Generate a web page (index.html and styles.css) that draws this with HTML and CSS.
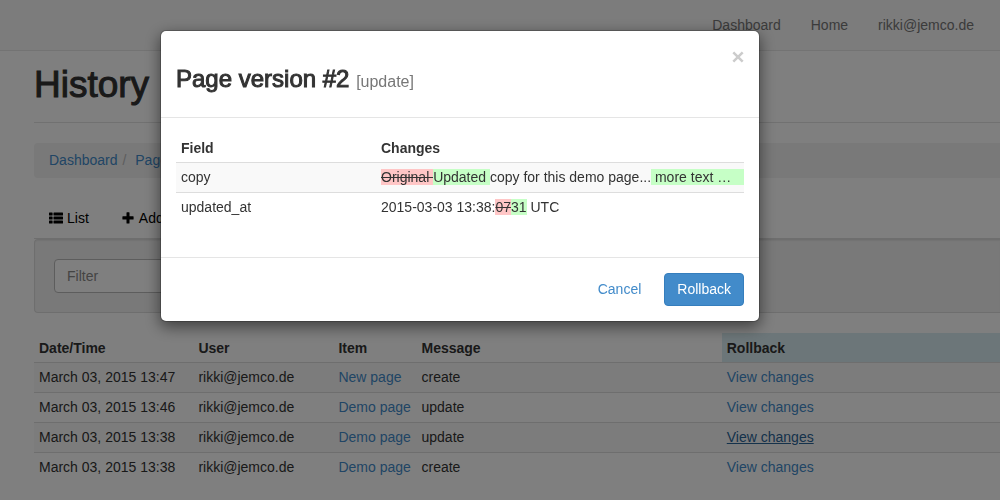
FILE: index.html
```html
<!DOCTYPE html>
<html lang="en">
<head>
<meta charset="utf-8">
<title>History</title>
<link rel="stylesheet" href="styles.css">
</head>
<body>
<nav class="navbar">
  <a href="#">Dashboard</a>
  <a href="#">Home</a>
  <a href="#">rikki@jemco.de</a>
</nav>
<main class="container">
  <h1 class="page-header">History</h1>
  <ol class="breadcrumb">
    <li><a href="#">Dashboard</a></li>
    <li><a href="#">Pages</a></li>
  </ol>
  <div class="tabs">
    <a href="#"><svg class="icon" viewBox="0 0 14 14" aria-hidden="true"><path d="M.5 1.500h2.600a.5.5 0 0 1 .5.5v2a.5.5 0 0 1-.5.5H.5a.5.5 0 0 1-.5-.5V2a.5.5 0 0 1 .5-.5zM5 1.500h8.500a.5.5 0 0 1 .5.5v2a.5.5 0 0 1-.5.5H5a.5.5 0 0 1-.5-.5V2a.5.5 0 0 1 .5-.5zM.5 5.500h2.600a.5.5 0 0 1 .5.5v2a.5.5 0 0 1-.5.5H.5a.5.5 0 0 1-.5-.5V6a.5.5 0 0 1 .5-.5zM5 5.500h8.500a.5.5 0 0 1 .5.5v2a.5.5 0 0 1-.5.5H5a.5.5 0 0 1-.5-.5V6a.5.5 0 0 1 .5-.5zM.5 9.500h2.600a.5.5 0 0 1 .5.5v2a.5.5 0 0 1-.5.5H.5a.5.5 0 0 1-.5-.5v-2a.5.5 0 0 1 .5-.5zM5 9.500h8.500a.5.5 0 0 1 .5.5v2a.5.5 0 0 1-.5.5H5a.5.5 0 0 1-.5-.5v-2a.5.5 0 0 1 .5-.5z"/></svg>List</a>
    <a href="#"><svg class="icon" viewBox="0 0 14 14" aria-hidden="true"><path d="M6 1.200h2a.5.5 0 0 1 .5.5V5.200h3.600a.5.5 0 0 1 .5.5v2.200a.5.5 0 0 1-.5.5H8.500v3.600a.5.5 0 0 1-.5.5H6a.5.5 0 0 1-.5-.5V8.400H1.900a.5.5 0 0 1-.5-.5V5.700a.5.5 0 0 1 .5-.5h3.600V1.700a.5.5 0 0 1 .5-.5z"/></svg>Add</a>
  </div>
  <form class="well"><input type="text" class="filter" placeholder="Filter" aria-label="Filter"></form>
  <table class="table history">
    <thead>
      <tr><th class="col-date">Date/Time</th><th class="col-user">User</th><th class="col-item">Item</th><th class="col-message">Message</th><th class="info">Rollback</th></tr>
    </thead>
    <tbody>
      <tr><td>March 03, 2015 13:47</td><td>rikki@jemco.de</td><td><a href="#">New page</a></td><td>create</td><td><a href="#">View changes</a></td></tr>
      <tr><td>March 03, 2015 13:46</td><td>rikki@jemco.de</td><td><a href="#">Demo page</a></td><td>update</td><td><a href="#">View changes</a></td></tr>
      <tr><td>March 03, 2015 13:38</td><td>rikki@jemco.de</td><td><a href="#">Demo page</a></td><td>update</td><td><a href="#" class="active">View changes</a></td></tr>
      <tr><td>March 03, 2015 13:38</td><td>rikki@jemco.de</td><td><a href="#">Demo page</a></td><td>create</td><td><a href="#">View changes</a></td></tr>
    </tbody>
  </table>
</main>
<div class="backdrop">
  <section class="modal" role="dialog" aria-labelledby="modal-title">
    <header class="modal-header">
      <h3 id="modal-title">Page version #2 <small>[update]</small></h3>
      <button type="button" class="close" aria-label="Close"><svg class="close-icon" viewBox="0 0 11 11" aria-hidden="true"><path d="M1.200 1.200l8.600 8.600M9.800 1.200l-8.600 8.600"/></svg></button>
    </header>
    <div class="modal-body">
      <table class="table">
        <thead><tr><th class="col-field">Field</th><th>Changes</th></tr></thead>
        <tbody>
          <tr><td>copy</td><td class="changes"><div class="diff"><del>Original </del><ins>Updated </ins><span>copy for this demo page...</span><ins class="rest"> more text …</ins></div></td></tr>
          <tr><td>updated_at</td><td class="changes"><div class="diff"><span>2015-03-03 13:38:</span><del>07</del><ins>31</ins><span> UTC</span></div></td></tr>
        </tbody>
      </table>
    </div>
    <footer class="modal-footer">
      <button type="button" class="btn btn-link">Cancel</button>
      <button type="button" class="btn btn-primary">Rollback</button>
    </footer>
  </section>
</div>
</body>
</html>
```

FILE: styles.css
```css
* {
  box-sizing: border-box;
}

body {
  margin: 0;
  background: #fff;
  color: #333;
  font: 14px/20px "Liberation Sans", Arial, sans-serif;
}

a {
  color: #428bca;
  text-decoration: none;
}

a.active {
  color: #2a6496;
  text-decoration: underline;
}

.navbar {
  display: flex;
  justify-content: flex-end;
  gap: 30px;
  padding: 15px 26px;
  background: #f8f8f8;
  border-bottom: 1px solid #e7e7e7;
}

.navbar a {
  color: #777;
}

.container {
  padding-left: 34px;
}

.page-header {
  margin: 0 0 20px;
  padding: 14px 0 17px;
  border-bottom: 1px solid #e3e3e3;
  font-size: 37px;
  font-weight: 500;
  line-height: 40px;
  -webkit-text-stroke: 1px #333;
}

.breadcrumb {
  display: flex;
  margin: 0 0 20px;
  padding: 8px 15px;
  background: #f2f2f2;
  border-radius: 4px 0 0 4px;
  line-height: 19px;
  list-style: none;
}

.breadcrumb li + li::before {
  content: "/\00a0";
  padding: 0 5px;
  color: #bbb;
}

.tabs {
  display: flex;
  gap: 2px;
  border-bottom: 1px solid #ddd;
}

.tabs a {
  display: flex;
  align-items: center;
  gap: 4px;
  padding: 10px 15px;
  color: #000;
}

.icon {
  width: 14px;
  height: 14px;
}

.well {
  padding: 19px;
  background: #f2f2f2;
  border: 1px solid #dcdcdc;
  border-right: 0;
  border-radius: 4px 0 0 4px;
  box-shadow: inset 0 1px 1px rgba(0, 0, 0, .05);
}

.filter {
  display: block;
  width: 40%;
  height: 34px;
  padding: 6px 12px;
  border: 1px solid #bbb;
  border-radius: 4px;
  background: #fff;
  font: inherit;
}

.filter::placeholder {
  color: #888;
}

.table {
  width: 100%;
  border-collapse: separate;
  border-spacing: 0;
  table-layout: fixed;
}

.table th {
  padding: 5px 5px 4px;
  text-align: left;
  white-space: nowrap;
}

.table td {
  padding: 4px 5px 5px;
  border-top: 1px solid #ddd;
  white-space: nowrap;
}

.table tbody tr:nth-child(odd) {
  background: #f9f9f9;
}

.history {
  margin: 20px 0;
}

.table .info {
  background: #d9edf2;
}

.col-date {
  width: 16.5%;
}

.col-user {
  width: 14.5%;
}

.col-item {
  width: 8.6%;
}

.col-message {
  width: 31.6%;
}

.col-field {
  width: 200px;
}

.backdrop {
  position: fixed;
  inset: 0;
  padding: 30px 160px;
  background: rgba(0, 0, 0, .5);
}

.modal {
  width: 600px;
  background: #fff;
  background-clip: padding-box;
  border: 1px solid rgba(0, 0, 0, .2);
  border-radius: 6px;
  box-shadow: 0 5px 15px rgba(0, 0, 0, .5);
}

.modal-header {
  display: flex;
  justify-content: space-between;
  align-items: flex-start;
  padding: 15px;
  border-bottom: 1px solid #e5e5e5;
}

.modal-header h3 {
  margin: 20px 0 10px;
  font-size: 24px;
  font-weight: 500;
  line-height: 26px;
  -webkit-text-stroke: 1px #333;
}

.modal-header small {
  color: #777;
  font-size: 16px;
  font-weight: 400;
  line-height: 16px;
  -webkit-text-stroke: 0;
}

.close {
  display: flex;
  margin: 0;
  padding: 5px 0;
  border: 0;
  background: none;
}

.close-icon {
  width: 12px;
  height: 12px;
  fill: none;
  stroke: #ccc;
  stroke-width: 2.3;
}

.modal-body {
  padding: 15px 15px 35px;
}

.table .changes {
  padding-right: 0;
}

.diff {
  display: flex;
  padding: 2px 0;
  line-height: 16px;
  white-space: pre;
}

.diff del {
  background: #ffc6c6;
}

.diff ins {
  background: #c6ffc6;
  text-decoration: none;
}

.diff .rest {
  flex: 1;
}

.modal-footer {
  display: flex;
  justify-content: flex-end;
  gap: 10px;
  padding: 15px;
  border-top: 1px solid #e5e5e5;
}

.btn {
  padding: 6px 12px;
  border: 1px solid transparent;
  border-radius: 4px;
  background: none;
  font: inherit;
  line-height: 19px;
}

.btn-link {
  color: #428bca;
}

.btn-primary {
  background: #428bca;
  border-color: #357ebd;
  color: #fff;
}
```
